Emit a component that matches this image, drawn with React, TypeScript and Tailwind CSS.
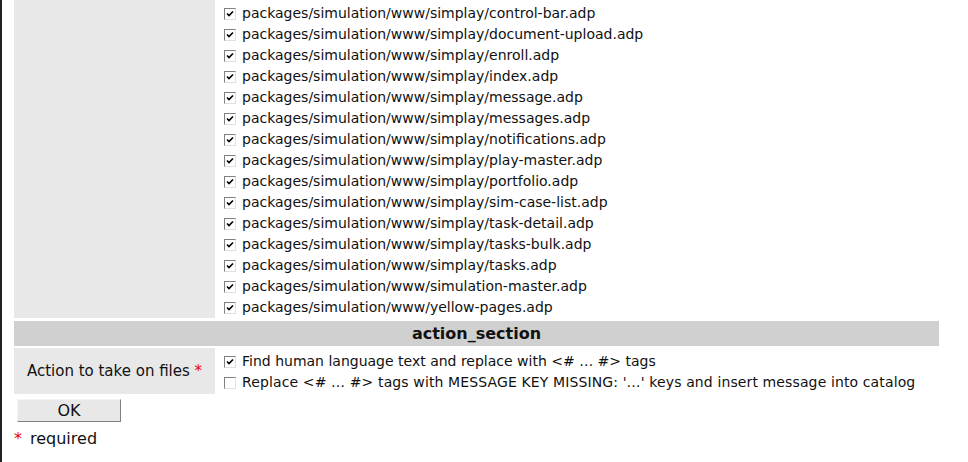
import React from "react";

const files = [
  "packages/simulation/www/simplay/control-bar.adp",
  "packages/simulation/www/simplay/document-upload.adp",
  "packages/simulation/www/simplay/enroll.adp",
  "packages/simulation/www/simplay/index.adp",
  "packages/simulation/www/simplay/message.adp",
  "packages/simulation/www/simplay/messages.adp",
  "packages/simulation/www/simplay/notifications.adp",
  "packages/simulation/www/simplay/play-master.adp",
  "packages/simulation/www/simplay/portfolio.adp",
  "packages/simulation/www/simplay/sim-case-list.adp",
  "packages/simulation/www/simplay/task-detail.adp",
  "packages/simulation/www/simplay/tasks-bulk.adp",
  "packages/simulation/www/simplay/tasks.adp",
  "packages/simulation/www/simulation-master.adp",
  "packages/simulation/www/yellow-pages.adp",
];

function Box({ checked }: { checked: boolean }) {
  return (
    <span className="inline-flex h-[12px] w-[12px] shrink-0 items-center justify-center border border-t-[#808080] border-l-[#808080] border-b-[#e0e0e0] border-r-[#e0e0e0] bg-white">
      {checked && (
        <svg width="8" height="8" viewBox="0 0 8 8">
          <path d="M1 3.5 L3 5.5 L7 1.5" fill="none" stroke="#000" strokeWidth="1.6" />
        </svg>
      )}
    </span>
  );
}

function Line({ checked, text, wide }: { checked: boolean; text: string; wide?: boolean }) {
  return (
    <div className="flex h-[21px] items-center gap-[6px]">
      <Box checked={checked} />
      <span className={wide ? "whitespace-nowrap tracking-[0.12px]" : "whitespace-nowrap"}>{text}</span>
    </div>
  );
}

export default function App() {
  return (
    <div
      className="h-[462px] w-[968px] overflow-hidden border-l-2 border-[#222] bg-white pl-[12px] text-[14px] text-[#111]"
      style={{ fontFamily: '"DejaVu Sans", Verdana, sans-serif' }}
    >
      <div className="flex gap-[3px]">
        <div className="w-[201px] bg-[#e8e8e8]" />
        <div className="pl-[6px] pt-[3px]">
          {files.map((f) => (
            <Line key={f} checked text={f} />
          ))}
        </div>
      </div>
      <div className="mt-[3px] flex h-[25px] w-[925px] items-center justify-center bg-[#d0d0d0] text-[16px] font-bold">
        action_section
      </div>
      <div className="mt-[2px] flex gap-[3px]">
        <div className="flex h-[46px] w-[201px] items-center justify-center bg-[#e8e8e8] text-[15px]">
          <span>
            Action to take on files <span className="text-[#e00]">*</span>
          </span>
        </div>
        <div className="pl-[6px] pt-[3px]">
          <Line checked text="Find human language text and replace with <# … #> tags" />
          <Line wide checked={false} text="Replace <# … #> tags with MESSAGE KEY MISSING: '…' keys and insert message into catalog" />
        </div>
      </div>
      <button className="ml-[3px] mt-[5px] block h-[23px] w-[104px] border border-t-[#f4f4f4] border-l-[#f4f4f4] border-b-[#808080] border-r-[#808080] bg-[#e8e8e8] text-[16px] leading-none text-[#111]">
        OK
      </button>
      <div className="mt-[5px] flex items-center gap-[8px] text-[16px]">
        <span className="text-[#e00]">*</span>
        <span>required</span>
      </div>
    </div>
  );
}
